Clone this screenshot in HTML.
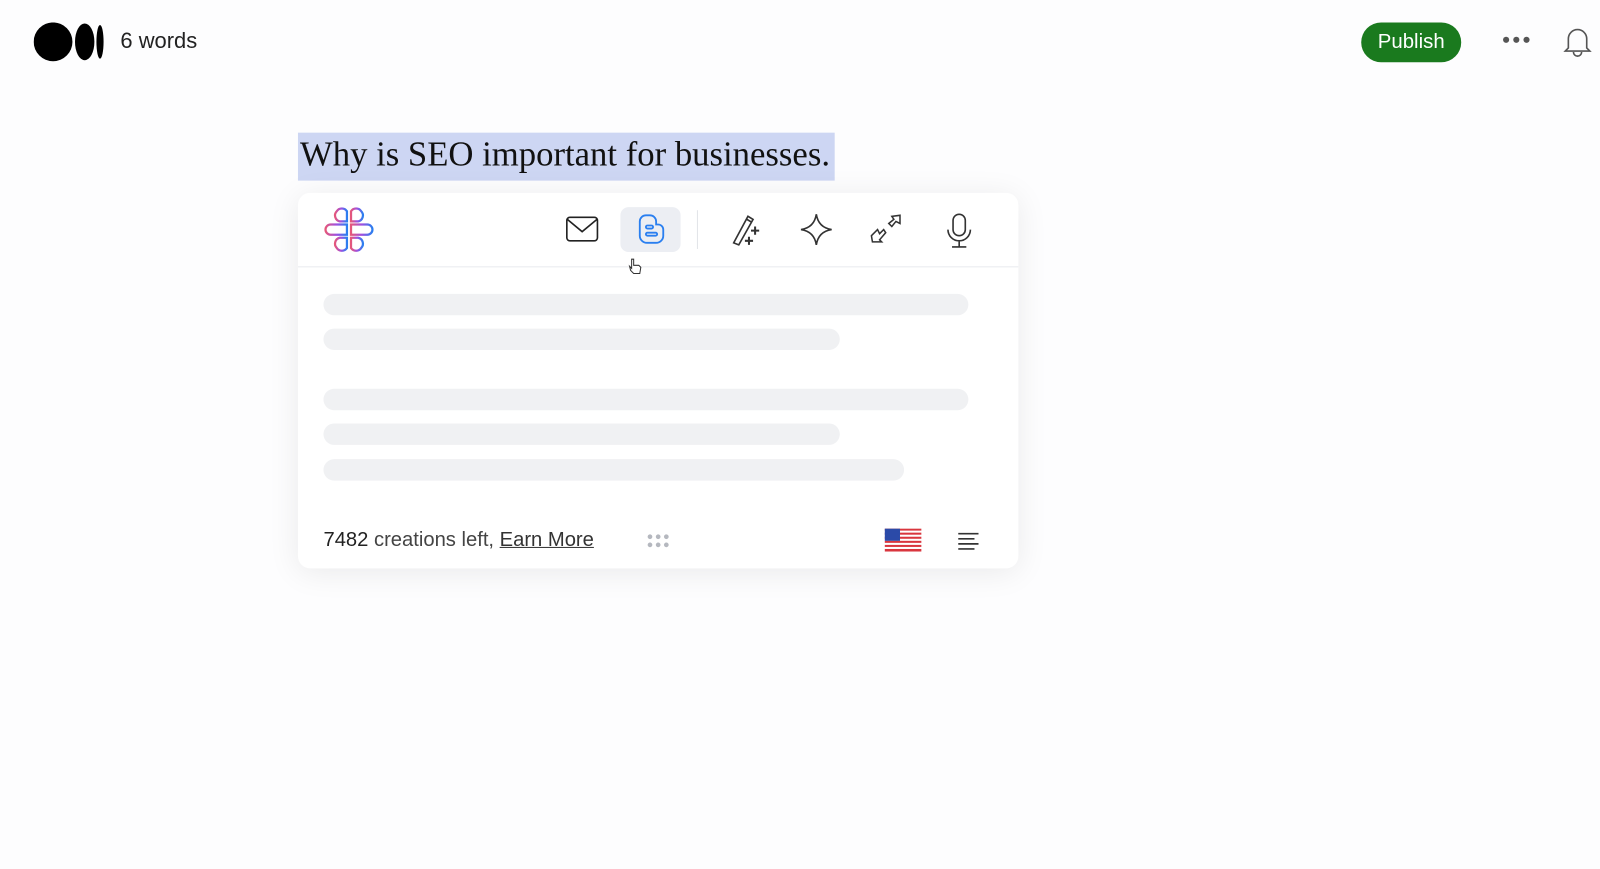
<!DOCTYPE html>
<html><head><meta charset="utf-8"><style>
body{margin:0;width:1600px;height:869px;background:#fdfdfe;font-family:"Liberation Sans",sans-serif;position:relative;overflow:hidden}
#w{position:absolute;left:0;top:0;width:1568px;height:852px;transform:scale(1.0204);transform-origin:0 0}
.abs{position:absolute}
.sk{position:absolute;left:317px;height:21px;border-radius:11px;background:#f0f1f3}
</style></head><body><div id="w">
<svg class="abs" style="left:33px;top:22px" width="70" height="40"><ellipse cx="19" cy="19" rx="19" ry="19"/><ellipse cx="50" cy="19" rx="9.5" ry="18"/><ellipse cx="65" cy="19" rx="3.5" ry="16.5"/></svg>
<div class="abs" style="left:118px;top:28px;font-size:21.5px;color:#222">6 words</div>
<div class="abs" style="left:1334px;top:22px;width:98px;height:39px;border-radius:20px;background:#1a7a1e;color:#fff;font-size:20px;line-height:39px;text-align:center">Publish</div>
<svg class="abs" style="left:1472px;top:34px" width="28" height="10" fill="#555"><circle cx="4" cy="5" r="3"/><circle cx="14" cy="5" r="3"/><circle cx="24" cy="5" r="3"/></svg>
<svg class="abs" style="left:1532px;top:24px" width="28" height="32" fill="none" stroke="#555" stroke-width="1.6"><path d="M5 23 V14 A9 9 0 0 1 23 14 V23 L26 26 H2 Z"/><path d="M10 27 A4 4 0 0 0 18 27"/></svg>
<div class="abs" style="left:292px;top:130px;width:526px;height:47px;background:#cdd6f3"></div>
<div class="abs" style="left:294px;top:133px;font-family:'Liberation Serif',serif;font-size:34px;color:#111;white-space:nowrap">Why is SEO important for businesses.</div>
<div class="abs" style="left:292px;top:189px;width:706px;height:368px;background:#fff;border-radius:12px;box-shadow:0 4px 30px rgba(0,0,0,.08)"></div>
<div class="abs" style="left:292px;top:261px;width:706px;height:1px;background:#e8eaee"></div>
<svg class="abs" style="left:316px;top:203px" width="54" height="44" fill="none" stroke-width="2.2"><defs><linearGradient id="g" x1="0" x2="1"><stop offset="0" stop-color="#e5577a"/><stop offset=".5" stop-color="#a050e0"/><stop offset="1" stop-color="#2a7ff0"/></linearGradient></defs><g stroke="url(#g)"><path d="M24 4 A6 6 0 0 0 14 4 A6 6 0 0 0 17 14 L24 14 Z"/><path d="M28 4 A6 6 0 0 1 38 4 A6 6 0 0 1 35 14 L28 14 Z"/><path d="M24 17 H8 A5 5 0 0 0 8 27 H24 Z"/><path d="M28 17 H44 A5 5 0 0 1 44 27 H28 Z"/><path d="M24 40 A6 6 0 0 1 14 40 A6 6 0 0 1 17 30 L24 30 Z"/><path d="M28 40 A6 6 0 0 0 38 40 A6 6 0 0 0 35 30 L28 30 Z"/></g></svg>
<svg class="abs" style="left:554px;top:210px" width="34" height="30" fill="none" stroke="#222" stroke-width="1.6"><rect x="1.5" y="3" width="30" height="23" rx="3"/><path d="M2 5 L16.5 17 L31 5"/></svg>
<div class="abs" style="left:608px;top:203px;width:59px;height:44px;background:#eceef3;border-radius:8px"></div>
<svg class="abs" style="left:624px;top:209px" width="28" height="32" fill="none" stroke="#2a7ff0" stroke-width="1.8"><path d="M3 8 A6 6 0 0 1 9 2 H13 A6 6 0 0 1 19 8 V11 H21 A5 5 0 0 1 26 16 V22 A7 7 0 0 1 19 29 H10 A7 7 0 0 1 3 22 Z"/><rect x="9" y="12" width="7" height="3" rx="1.5"/><rect x="9" y="19" width="11" height="3" rx="1.5"/></svg>
<div class="abs" style="left:683px;top:206px;width:1px;height:38px;background:#e2e4e8"></div>
<svg class="abs" style="left:716px;top:208px" width="32" height="34" fill="none" stroke="#333" stroke-width="1.6"><path d="M3 30 L17 4 L22 7 L8 32 Z M16 7 L21 10"/><path d="M24 14 V22 M20 18 H28 M18 24 V32 M14 28 H22" stroke-width="2"/></svg>
<svg class="abs" style="left:783px;top:208px" width="34" height="34" fill="none" stroke="#333" stroke-width="1.6"><path d="M17 2 Q19 15 32 17 Q19 19 17 32 Q15 19 2 17 Q15 15 17 2 Z"/></svg>
<svg class="abs" style="left:852px;top:209px" width="32" height="30" fill="none" stroke="#333" stroke-width="1.5"><path d="M2 22 L8 16 L10 20 L14 16 L16 19 L10 26 L12 28 L3 28 Z"/><path d="M30 2 L30 10 L26 8 L22 13 L19 10 L24 6 L22 3 Z"/></svg>
<svg class="abs" style="left:926px;top:208px" width="28" height="36" fill="none" stroke="#333" stroke-width="1.6"><rect x="8" y="2" width="12" height="21" rx="6"/><path d="M3 17 A11 11 0 0 0 25 17 M14 28 V34 M7 34 H21"/></svg>
<svg class="abs" style="left:615px;top:252px" width="16" height="18"><path d="M4 2 V11 L2 9 L3 13 L6 16 H12 L13 10 L11 8 L6 8 V2 Z" fill="#fff" stroke="#333" stroke-width="1"/></svg>
<div class="sk" style="top:288px;width:632px"></div>
<div class="sk" style="top:322px;width:506px"></div>
<div class="sk" style="top:381px;width:632px"></div>
<div class="sk" style="top:415px;width:506px"></div>
<div class="sk" style="top:450px;width:569px"></div>
<div class="abs" style="left:317px;top:518px;font-size:19.8px;color:#444;white-space:nowrap"><span style="color:#222">7482</span> creations left, <span style="text-decoration:underline;color:#333">Earn More</span></div>
<svg class="abs" style="left:634px;top:522px" width="24" height="16" fill="#b5b8bf"><circle cx="3" cy="4" r="2.3"/><circle cx="11" cy="4" r="2.3"/><circle cx="19" cy="4" r="2.3"/><circle cx="3" cy="12" r="2.3"/><circle cx="11" cy="12" r="2.3"/><circle cx="19" cy="12" r="2.3"/></svg>
<svg class="abs" style="left:867px;top:518px" width="36" height="24"><rect width="36" height="24" fill="#fff"/><g fill="#d9363e"><rect y="0" width="36" height="2"/><rect y="4" width="36" height="2"/><rect y="8" width="36" height="2"/><rect y="12" width="36" height="2"/><rect y="16" width="36" height="2"/><rect y="20" width="36" height="2.5"/></g><rect width="15" height="12" fill="#2b4aa8"/></svg>
<svg class="abs" style="left:939px;top:521px" width="20" height="18" stroke="#333" stroke-width="1.6"><path d="M0 2 H20 M0 7 H16 M0 12 H20 M0 17 H16"/></svg>
</div></body></html>
